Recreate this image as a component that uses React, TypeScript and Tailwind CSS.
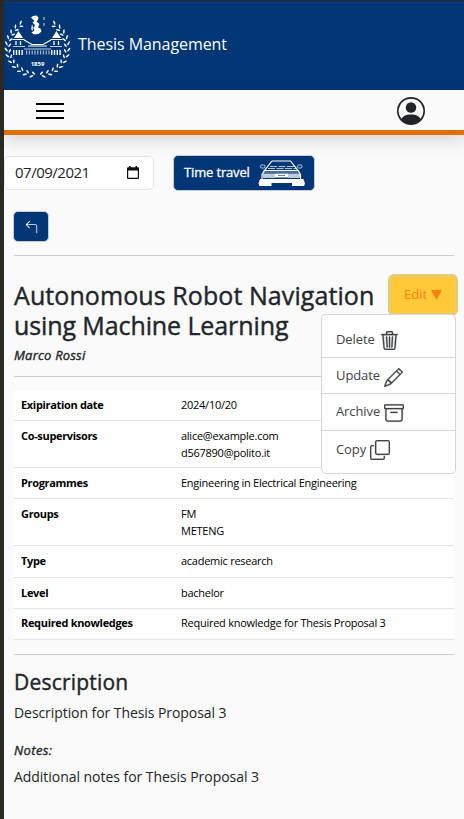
import type { ReactNode } from "react";
import {
  BsArchive,
  BsArrow90DegLeft,
  BsCopy,
  BsPencil,
  BsPersonCircle,
  BsTrash3,
} from "react-icons/bs";

type Leaf = { x: number; y: number; a: number };

const laurel: Leaf[] = Array.from({ length: 12 }, (_, i) => {
  const deg = 99 + i * 12.4;
  const rad = (deg * Math.PI) / 180;
  return { x: 33.5 + 30.5 * Math.cos(rad), y: 32.5 + 28.5 * Math.sin(rad), a: deg };
});

function LaurelBranch() {
  return (
    <g>
      {laurel.map((leaf) => (
        <g key={leaf.a} transform={`translate(${leaf.x} ${leaf.y}) rotate(${leaf.a})`}>
          <ellipse cx="1.500" cy="0" rx="2.300" ry="0.800" transform="rotate(55)" />
          <ellipse cx="1.200" cy="2.300" rx="2.100" ry="0.800" transform="rotate(125)" />
        </g>
      ))}
    </g>
  );
}

function Crest() {
  return (
    <svg width="68" height="66" viewBox="0 0 68 66" fill="#fff" className="shrink-0">
      <LaurelBranch />
      <g transform="translate(67 0) scale(-1 1)">
        <LaurelBranch />
      </g>
      <path d="M27 2.500l2-1.500 3.500-.5 2 2-.5 2.500-1.500 1.500 3 2.500-1.500 3.500 2.500 1 1 3-3 2.500-4.500.500-2.500-2 3-2-1-2.500 1.500-3-2.500-2.500 2-1.500z" />
      <path d="M39.500 2h1v3h-1zM39.500 8h1v3h-1zM28 9l1.500 4-1 3-1.500-2z" opacity=".8" />
      <path d="M10 23l4.500-7 4.500 7zM48 23l4.500-7 4.500 7z" />
      <path
        d="M8.500 24.500h12M46.500 24.500h12M20 25l8 4.500h11l8-4.500M24 31h19"
        stroke="#fff"
        strokeWidth="1.200"
        fill="none"
      />
      <path d="M12 26v4M16.500 26v4M50 26v4M54.500 26v4" stroke="#fff" strokeWidth="1.300" fill="none" />
      <path d="M9 31.500h12M46 31.500h12M20 34h27" stroke="#fff" strokeWidth="1" fill="none" opacity=".75" />
      <path
        d="M9 37.500h11M47 37.500h11"
        stroke="#fff"
        strokeWidth="5"
        strokeDasharray="1.400 1.400"
        fill="none"
      />
      <path d="M22 37.500h24" stroke="#fff" strokeWidth="4" strokeDasharray="1.200 1.600" fill="none" opacity=".65" />
      <text
        x="33.500"
        y="51"
        textAnchor="middle"
        fontSize="6"
        fontWeight="700"
        fontFamily="'Open Sans', sans-serif"
      >
        1859
      </text>
    </svg>
  );
}

function Car() {
  return (
    <svg width="48" height="27" viewBox="0 0 48 27" fill="none" stroke="#fff" strokeWidth="1.200" className="block">
      <path d="M14 1h18.500l7.500 9.500H6.500z" />
      <path d="M12 6.500h24M10 8.500h28" strokeWidth="1" strokeDasharray="7 1.500" opacity=".7" />
      <rect x="2.500" y="5" width="4.500" height="3" rx="1.200" strokeWidth=".9" opacity=".8" />
      <rect x="39.500" y="5" width="4.500" height="3" rx="1.200" strokeWidth=".9" opacity=".8" />
      <path d="M6.500 10.500l-2.500 4v5h38.500v-5l-2.500-4" />
      <path d="M5 12h37" strokeWidth=".8" opacity=".7" />
      <path d="M5 13.500h12v4.500H5zM30 13.500h12v4.500H30z" fill="#fff" stroke="none" opacity=".75" />
      <path d="M17 13.500h13v4H17z" fill="#fff" stroke="none" />
      <path d="M20 15.500h7" stroke="#003576" strokeWidth="1" opacity=".6" />
      <path
        d="M2 19h4l2 1h31l2-1h4.500l1.500 4.500-1 2.500H34v-3H13.500v3H1.500L.5 23.500z"
        fill="#fff"
        stroke="none"
      />
    </svg>
  );
}

function CalendarGlyph() {
  return (
    <svg width="12" height="13" viewBox="0 0 12 13" fill="#111">
      <path
        fillRule="evenodd"
        d="M2 0h1.500v1.300h5V0H10v1.300h1q1 0 1 1V12q0 1-1 1H1q-1 0-1-1V2.300q0-1 1-1h1zM1.200 4.500v7.300h9.600V4.500z"
      />
    </svg>
  );
}

const rows: { label: string; values: string[]; box: string }[] = [
  { label: "Exipiration date", values: ["2024/10/20"], box: "h-[31px] pt-[7px]" },
  { label: "Co-supervisors", values: ["alice@example.com", "d567890@polito.it"], box: "h-[47px] pt-[7px]" },
  { label: "Programmes", values: ["Engineering in Electrical Engineering"], box: "h-[31px] pt-[7px]" },
  { label: "Groups", values: ["FM", "METENG"], box: "h-[47px] pt-[7px]" },
  { label: "Type", values: ["academic research"], box: "h-[32px] pt-[7px]" },
  { label: "Level", values: ["bachelor"], box: "h-[31px] pt-[7px]" },
  { label: "Required knowledges", values: ["Required knowledge for Thesis Proposal 3"], box: "h-[31px] pt-[6px]" },
];

function MenuItem({ label, height, children }: { label: string; height: string; children: ReactNode }) {
  return (
    <button
      className={`flex w-full items-center border-b border-[#d6d6d6] pl-3.5 text-[13px] tracking-[-0.1px] text-[#3f4347] last:border-b-0 ${height}`}
    >
      <span className="whitespace-nowrap">{label}</span>
      {children}
    </button>
  );
}

export default function App() {
  return (
    <div className="h-[819px] w-[464px] overflow-hidden border-l-4 border-t border-[#2b2926] bg-[#fafafa] font-['Open_Sans',sans-serif] text-[#212529]">
      <header className="flex h-[89px] items-start bg-[#003576]">
        <div className="mt-[14px] flex items-center gap-[6px]">
          <Crest />
          <span className="-mt-[8px] whitespace-nowrap text-base tracking-[-0.06px] text-white">
            Thesis Management
          </span>
        </div>
      </header>

      <nav className="flex h-[45px] items-center justify-between border-b-[5px] border-[#e07006] pl-8 pr-[39px] shadow-[0_7px_16px_rgba(0,0,0,0.13)]">
        <button className="mt-px flex w-7 flex-col gap-[5px]">
          <span className="h-[2px] bg-black" />
          <span className="h-[2px] bg-black" />
          <span className="h-[2px] bg-black" />
        </button>
        <BsPersonCircle size={28} className="mt-0.5" />
      </nav>

      <main className="pr-[10px]">
        <div className="flex items-center gap-[19px] pt-5">
          <div className="flex h-[34px] w-[150px] items-center justify-between rounded-[5px] border border-[#e2e5e8] bg-white pb-0.5 pl-2.5 pr-3.5 text-[15px] tracking-[-0.5px]">
            <span>07/09/2021</span>
            <CalendarGlyph />
          </div>
          <button className="flex h-9 w-[142px] items-center justify-between rounded-[5px] border border-[#c3ced9] bg-[#003576] pl-2.5 pr-2 text-[13px] text-white">
            <span className="tracking-[-0.15px] [-webkit-text-stroke:0.3px]">Time travel</span>
            <Car />
          </button>
        </div>

        <div className="ml-2.5">
          <button className="-ml-px mt-5 flex h-[31px] w-[36px] items-center justify-center rounded-[5px] border border-[#c3ced9] bg-[#003576] pt-0.5 text-white">
            <BsArrow90DegLeft size={13} />
          </button>
          <hr className="mt-[13px] border-[#cdcdcd]" />

          <div className="relative mt-[24px] h-[90px]">
            <h1 className="whitespace-nowrap text-[25px] leading-[30px] [-webkit-text-stroke:0.4px]">
              <span className="block tracking-[0.08px]">Autonomous Robot Navigation</span>
              <span className="block tracking-[-0.1px]">using Machine Learning</span>
            </h1>
            <p className="mt-[6px] text-[13px] italic leading-[18px] tracking-[0.2px] [-webkit-text-stroke:0.35px]">
              Marco Rossi
            </p>

            <div className="absolute -right-[4px] -top-[6px] z-10 flex w-[137px] flex-col items-end">
              <button className="flex h-[42px] w-[70px] items-center justify-center gap-1 rounded-md border-[3px] border-[#e7cb76] bg-[#ffca38] text-[13px] text-[#fd7e14]">
                Edit
                <svg width="11" height="10" viewBox="0 0 11 10" fill="currentColor">
                  <path d="M0 0h11L5.500 10z" />
                </svg>
              </button>
              <div className="-mt-[2px] mr-0.5 h-[160px] w-[135px] rounded-[5px] border border-[#d6d6d6] bg-white pt-1.5">
                <MenuItem label="Delete" height="h-[37px] pt-0.5">
                  <BsTrash3 size={19} className="ml-[5px] [stroke-width:0.3]" stroke="currentColor" />
                </MenuItem>
                <MenuItem label="Update" height="h-[36px] pt-px">
                  <BsPencil size={19} className="ml-1 mt-0.5 [stroke-width:0.2]" stroke="currentColor" />
                </MenuItem>
                <MenuItem label="Archive" height="h-[37px]">
                  <BsArchive size={20} className="ml-1 mt-0.5 [stroke-width:0.2]" stroke="currentColor" />
                </MenuItem>
                <MenuItem label="Copy" height="h-[37px]">
                  <BsCopy size={20} className="ml-1 [stroke-width:0.2]" stroke="currentColor" />
                </MenuItem>
              </div>
            </div>
          </div>
          <hr className="mt-[6px] border-[#cdcdcd]" />

          <dl className="mt-[13px] text-[11px] leading-[16.500px] text-black">
            {rows.map((row) => (
              <div key={row.label} className={`flex border-b border-[#e3e5e7] bg-white ${row.box}`}>
                <dt className="w-[160px] shrink-0 whitespace-nowrap pl-[7px] font-bold tracking-[-0.33px]">
                  {row.label}
                </dt>
                <dd className="whitespace-nowrap pl-[7px] tracking-[-0.26px]">
                  {row.values.map((value) => (
                    <div key={value}>{value}</div>
                  ))}
                </dd>
              </div>
            ))}
          </dl>

          <hr className="mt-[14px] border-[#cdcdcd]" />
          <h2 className="mt-[15px] text-[21px] leading-[25px] tracking-[0.2px] [-webkit-text-stroke:0.4px]">
            Description
          </h2>
          <p className="mt-[7px] text-sm leading-[22px] tracking-[-0.07px]">Description for Thesis Proposal 3</p>
          <h3 className="mt-[17px] text-[13px] italic leading-[18px] tracking-[0.4px] [-webkit-text-stroke:0.35px]">
            Notes:
          </h3>
          <p className="mt-[7px] text-sm leading-[22px] tracking-[-0.04px]">
            Additional notes for Thesis Proposal 3
          </p>
        </div>
      </main>
    </div>
  );
}
